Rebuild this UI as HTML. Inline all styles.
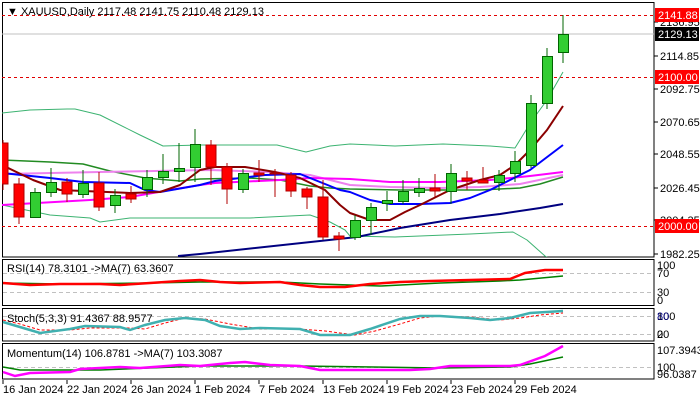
<!DOCTYPE html>
<html><head><meta charset="utf-8"><style>
html,body{margin:0;padding:0;background:#fff;}
svg{display:block;font-family:"Liberation Sans",sans-serif;font-size:11px;}
</style></head><body>
<svg width="700" height="400" viewBox="0 0 700 400" xmlns="http://www.w3.org/2000/svg">
<defs><clipPath id="cm"><rect x="2" y="2" width="652" height="255"/></clipPath></defs>
<rect width="700" height="400" fill="#fff"/>
<!-- main frame -->
<rect x="2.5" y="2.5" width="651.5" height="254.5" fill="none" stroke="#000"/>
<g clip-path="url(#cm)">
<line x1="2" y1="34" x2="654" y2="34" stroke="#c0c0c0"/>
<g stroke="#e00000" stroke-dasharray="3,3">
<line x1="2" y1="15.5" x2="654" y2="15.5"/><line x1="2" y1="77.5" x2="654" y2="77.5"/><line x1="2" y1="226.5" x2="654" y2="226.5"/></g>
<g fill="none" stroke-linejoin="round">
<polyline stroke="#3cb371" points="2,113 30,110 67,109 75,109 100,115 140,135 163,146 200,145 250,145 277,145 306,152 330,146 350,144 395,146 443,144 490,146 515,148 531,122 547,100 563,72"/>
<polyline stroke="#3cb371" points="2,205 50,215 90,218 100,222 130,218 250,218 310,215 330,222 345,230 350,236 395,237 470,234 513,232 527,240 545,256 560,265"/>
<polyline stroke="#228b22" stroke-width="1.5" points="2,160 50,162 83,164 110,171 145,178 180,181 200,179 250,178 280,180 310,186 330,188 350,189 400,190 480,190 520,188 540,184 563,177"/>
<polyline stroke="#ee82ee" stroke-width="2" points="2,174 100,172 210,170 270,172 310,175 350,185 390,187 440,188 480,187 520,184 563,175"/>
<polyline stroke="#ff00ff" stroke-width="2" points="2,205 90,200 130,197 170,190 200,185 215,183 280,180 310,178 350,179 390,182 440,182 490,180 530,176 563,172"/>
<polyline stroke="#0000ff" stroke-width="2" points="2,173 50,178 83,182 130,183 145,190 160,192 200,185 215,181 265,175 300,174 310,178 340,190 350,192 370,200 390,204 420,204 450,203 470,198 490,190 510,180 530,170 563,145"/>
<polyline stroke="#8b0000" stroke-width="2" points="2,165 33,180 60,190 130,193 160,192 180,185 200,170 215,167 245,167 275,172 300,178 325,190 340,205 350,213 370,220 390,220 405,212 420,205 450,190 480,180 500,175 515,165 530,150 547,130 563,106"/>
<polyline stroke="#000080" stroke-width="2" points="178,256 200,254 357,237 400,228 450,220 500,214 540,208 563,204"/>
</g>
<g stroke-width="1">
<!-- red candles -->
<g fill="#ff0000" stroke="#b00000">
<line x1="3" y1="140" x2="3" y2="190"/><rect x="-2" y="143" width="10" height="41"/>
<line x1="19" y1="178" x2="19" y2="224"/><rect x="14" y="184" width="10" height="33"/>
<line x1="67" y1="178" x2="67" y2="202"/><rect x="62" y="182" width="10" height="12"/>
<line x1="99" y1="172" x2="99" y2="211"/><rect x="94" y="183" width="10" height="24"/>
<line x1="131" y1="186" x2="131" y2="203"/><rect x="126" y="194" width="10" height="5"/>
<line x1="211" y1="140" x2="211" y2="185"/><rect x="206" y="145" width="10" height="22"/>
<line x1="227" y1="163" x2="227" y2="204"/><rect x="222" y="167" width="10" height="22"/>
<line x1="259" y1="160" x2="259" y2="182"/><rect x="254" y="173" width="10" height="2"/>
<line x1="275" y1="169" x2="275" y2="197"/><rect x="270" y="173" width="10" height="1"/>
<line x1="291" y1="172" x2="291" y2="197"/><rect x="286" y="175" width="10" height="16"/>
<line x1="307" y1="187" x2="307" y2="209"/><rect x="302" y="189" width="10" height="8"/>
<line x1="323" y1="180" x2="323" y2="240"/><rect x="318" y="197" width="10" height="40"/>
<line x1="339" y1="232" x2="339" y2="251"/><rect x="334" y="236" width="10" height="3"/>
<line x1="435" y1="174" x2="435" y2="197"/><rect x="430" y="188" width="10" height="3"/>
<line x1="467" y1="171" x2="467" y2="190"/><rect x="462" y="178" width="10" height="3"/>
<line x1="483" y1="167" x2="483" y2="183"/><rect x="478" y="180" width="10" height="3"/>
</g>
<g fill="#32cd32" stroke="#006400">
<line x1="35" y1="188" x2="35" y2="218"/><rect x="30.5" y="192.5" width="10" height="25"/>
<line x1="51" y1="168" x2="51" y2="197"/><rect x="46.5" y="182.5" width="10" height="10"/>
<line x1="83" y1="170" x2="83" y2="198"/><rect x="78.5" y="183.5" width="10" height="11"/>
<line x1="115" y1="189" x2="115" y2="213"/><rect x="110.5" y="195.5" width="10" height="10"/>
<line x1="147" y1="170" x2="147" y2="197"/><rect x="142.5" y="177.5" width="10" height="12"/>
<line x1="163" y1="154" x2="163" y2="184"/><rect x="158.5" y="171.5" width="10" height="6"/>
<line x1="179" y1="143" x2="179" y2="182"/><rect x="174.5" y="168.5" width="10" height="3"/>
<line x1="195" y1="129" x2="195" y2="182"/><rect x="190.5" y="144.5" width="10" height="23"/>
<line x1="243" y1="169" x2="243" y2="193"/><rect x="238.5" y="173.5" width="10" height="16"/>
<line x1="355" y1="215" x2="355" y2="240"/><rect x="350.5" y="220.5" width="10" height="17"/>
<line x1="371" y1="203" x2="371" y2="235"/><rect x="366.5" y="207.5" width="10" height="13"/>
<line x1="387" y1="191" x2="387" y2="211"/><rect x="382.5" y="200.5" width="10" height="3"/>
<line x1="403" y1="180" x2="403" y2="204"/><rect x="398.5" y="191.5" width="10" height="10"/>
<line x1="419" y1="178" x2="419" y2="197"/><rect x="414.5" y="188.5" width="10" height="4"/>
<line x1="451" y1="164" x2="451" y2="204"/><rect x="446.5" y="173.5" width="10" height="18"/>
<line x1="499" y1="170" x2="499" y2="191"/><rect x="494.5" y="175.5" width="10" height="7"/>
<line x1="515" y1="151" x2="515" y2="182"/><rect x="510.5" y="161.5" width="10" height="12"/>
<line x1="531" y1="95" x2="531" y2="168"/><rect x="526.5" y="103.5" width="10" height="62"/>
<line x1="547" y1="48" x2="547" y2="109"/><rect x="542.5" y="56.5" width="10" height="47"/>
<line x1="563" y1="15" x2="563" y2="63"/><rect x="558.5" y="34.5" width="10" height="18"/>
</g>
</g>
</g>
<text x="7" y="15" fill="#000">▼ XAUUSD,Daily  2117.48 2141.75 2110.48 2129.13</text>
<!-- price scale -->
<g stroke="#000"><line x1="654" y1="22" x2="658" y2="22"/><line x1="654" y1="56" x2="658" y2="56"/><line x1="654" y1="89" x2="658" y2="89"/><line x1="654" y1="122" x2="658" y2="122"/><line x1="654" y1="154" x2="658" y2="154"/><line x1="654" y1="188" x2="658" y2="188"/><line x1="654" y1="220" x2="658" y2="220"/><line x1="654" y1="254" x2="658" y2="254"/></g>
<g fill="#000">
<text x="660" y="26">2136.95</text><text x="660" y="60">2114.85</text><text x="660" y="93">2092.75</text><text x="660" y="126">2070.65</text><text x="660" y="158">2048.55</text><text x="660" y="192">2026.45</text><text x="660" y="224">2004.35</text><text x="660" y="258">1982.25</text>
</g>
<rect x="655" y="8" width="44" height="14" fill="#ff0000"/><text x="658" y="19" fill="#fff">2141.88</text>
<rect x="655" y="27" width="44" height="14" fill="#000"/><text x="658" y="38" fill="#fff">2129.13</text>
<rect x="655" y="70" width="44" height="14" fill="#ff0000"/><text x="658" y="81" fill="#fff">2100.00</text>
<rect x="655" y="219" width="44" height="14" fill="#ff0000"/><text x="658" y="230" fill="#fff">2000.00</text>
<!-- RSI -->
<rect x="2.5" y="259.5" width="651.5" height="46" fill="none" stroke="#000"/>
<g stroke="#c0c0c0" stroke-dasharray="4,3"><line x1="3" y1="273.5" x2="653" y2="273.5"/><line x1="3" y1="292.5" x2="653" y2="292.5"/></g>
<polyline fill="none" stroke="#008000" stroke-width="1.5" points="3,283 60,284 150,283 200,282 280,282 320,284 380,286 440,283 500,281 520,280 563,276"/>
<polyline fill="none" stroke="#ff0000" stroke-width="2.5" points="3,283 30,285 60,284 100,284 120,285 150,283 180,281 200,280 220,282 240,283 280,282 300,285 320,287 345,287 370,284 400,282 430,281 470,280 510,279 525,273 545,270 563,270"/>
<text x="7" y="272">RSI(14) 78.3101  -&gt;MA(7) 63.3607</text>
<g fill="#000"><text x="657" y="269">100</text><text x="657" y="277">70</text><text x="657" y="296">30</text><text x="657" y="304">0</text></g>
<!-- Stoch -->
<rect x="2.5" y="308.5" width="651.5" height="32.5" fill="none" stroke="#000"/>
<g stroke="#c0c0c0" stroke-dasharray="4,3"><line x1="3" y1="316.5" x2="653" y2="316.5"/><line x1="3" y1="334.5" x2="653" y2="334.5"/></g>
<polyline fill="none" stroke="#ff0000" stroke-dasharray="3,2" points="3,320 20,324 40,330 70,330 90,328 130,328 145,329 165,323 185,318 205,319 230,324 260,329 300,329 325,331 355,335 375,331 400,324 420,318 440,316 470,317 500,320 520,318 540,315 563,313"/>
<polyline fill="none" stroke="#40b0b0" stroke-width="2.5" points="3,322 30,330 40,333 70,329 85,326 120,327 130,330 145,325 165,320 185,318 205,320 220,326 240,329 260,328 300,329 320,335 350,335 370,329 400,319 420,316 440,316 470,318 490,320 510,318 530,313 563,311"/>
<text x="7" y="322">Stoch(5,3,3) 91.4367 88.9577</text>
<g fill="#000"><text x="657" y="320">100</text><text x="657" y="320" fill="#000080">80</text><text x="657" y="338">20</text><text x="657" y="338">0</text></g>
<!-- Momentum -->
<rect x="2.5" y="343.5" width="651.5" height="35.5" fill="none" stroke="#000"/>
<line x1="3" y1="367.5" x2="653" y2="367.5" stroke="#c0c0c0" stroke-dasharray="4,3"/>
<polyline fill="none" stroke="#008000" stroke-width="1.5" points="3,367 20,370 100,370 200,366 300,366 440,368 510,367 530,364 563,357"/>
<polyline fill="none" stroke="#ff00ff" stroke-width="2.5" points="3,372 15,376 30,373 70,372 80,369 120,367 140,368 180,365 200,366 230,363 245,362 270,365 300,366 320,370 380,370 410,370 430,369 450,366 510,366 520,365 545,356 563,346"/>
<text x="7" y="357">Momentum(14) 106.8781  -&gt;MA(7) 103.3087</text>
<g fill="#000"><text x="657" y="354">107.3943</text><text x="657" y="371">100</text><text x="657" y="378">96.0387</text></g>
<!-- dates -->
<g stroke="#000"><line x1="3" y1="380" x2="3" y2="384"/><line x1="67" y1="380" x2="67" y2="384"/><line x1="131" y1="380" x2="131" y2="384"/><line x1="195" y1="380" x2="195" y2="384"/><line x1="259" y1="380" x2="259" y2="384"/><line x1="323" y1="380" x2="323" y2="384"/><line x1="387" y1="380" x2="387" y2="384"/><line x1="451" y1="380" x2="451" y2="384"/><line x1="515" y1="380" x2="515" y2="384"/></g>
<g fill="#000"><text x="3" y="393">16 Jan 2024</text><text x="67" y="393">22 Jan 2024</text><text x="131" y="393">26 Jan 2024</text><text x="195" y="393">1 Feb 2024</text><text x="259" y="393">7 Feb 2024</text><text x="323" y="393">13 Feb 2024</text><text x="387" y="393">19 Feb 2024</text><text x="451" y="393">23 Feb 2024</text><text x="515" y="393">29 Feb 2024</text></g>
</svg>
</body></html>
